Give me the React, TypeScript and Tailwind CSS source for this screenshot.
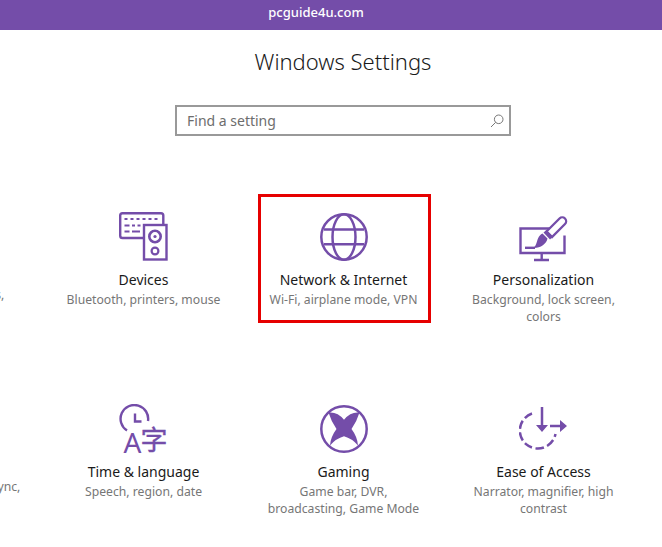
const P = "#744da9";

function DevicesIcon() {
  return (
    <svg width="50" height="50" viewBox="0 0 50 50" fill="none" stroke={P} strokeWidth="2.4">
      <path d="M24 26H3.5a2.3 2.3 0 0 1-2.3-2.3V3.5A2.3 2.3 0 0 1 3.5 1.2H42a2.3 2.3 0 0 1 2.3 2.3V12" />
      <rect x="25" y="13" width="22.5" height="34.5" />
      <circle cx="36" cy="24.5" r="5.7" strokeWidth="2.6" />
      <circle cx="36" cy="24.5" r="1.6" fill={P} stroke="none" />
      <circle cx="36" cy="39" r="3.4" strokeWidth="2.2" />
      <path d="M5.5 7h3M11.5 7h3M17.500 7h3M23.500 7h3M29.500 7h3M35.500 7h3M5.500 13.500h5M13 13.500h3M18.500 13.500h3M5.500 19.500h5M13 19.500h8" strokeWidth="2" />
    </svg>
  );
}

function GlobeIcon() {
  return (
    <svg width="50" height="50" viewBox="0 0 50 50" fill="none" stroke={P} strokeWidth="2.5">
      <circle cx="25" cy="25" r="22.700" />
      <ellipse cx="25" cy="25" rx="11.500" ry="22.700" />
      <path d="M5 17.500h40M5 32.300h40" />
    </svg>
  );
}

function BrushIcon() {
  return (
    <svg width="50" height="50" viewBox="0 0 50 50" fill="none" stroke={P} strokeWidth="2.4">
      <path d="M31 16.500H1.500V41H45.500V23.500" />
      <path d="M22.700 41v7M15 48h15" />
      <path d="M6 35.800h10" />
      <path d="M27.500 19.500 40.500 6.500a3.800 3.800 0 0 1 5.500 5.500L33 25z" strokeWidth="2.300" fill="white" />
      <path d="M24.500 20.500 27.500 18 34 24.500 31 27.500z" fill={P} stroke="none" />
      <path d="M23.500 21.500 28.500 26.500C27.500 32 21 36.500 14 36C17.500 34 17.500 30 19 26.500C20 24 21.500 22.500 23.500 21.500Z" fill={P} stroke="none" />
    </svg>
  );
}

function TimeIcon() {
  return (
    <svg width="50" height="50" viewBox="0 0 50 50" fill="none" stroke={P} strokeWidth="2.400">
      <path d="M8 26.500A13.800 13.800 0 1 1 29 17" />
      <path d="M16 9.500v8h6.500" />
      <text x="4.500" y="49" fontFamily="'Noto Sans', sans-serif" fontSize="28" fill={P} stroke="none">A</text>
      <text x="21.500" y="45.500" fontFamily="'Noto Sans CJK SC', sans-serif" fontSize="27" fill={P} stroke={P} strokeWidth="0.4">字</text>
    </svg>
  );
}

function XboxIcon() {
  return (
    <svg width="50" height="50" viewBox="0 0 50 50" fill="none" stroke={P} strokeWidth="2.500">
      <circle cx="25" cy="25" r="22.700" />
      <path d="M9.500 8.500Q18.500 7.500 25 15.700Q31.500 7.500 40.500 8.500Q38 17 32.500 25Q38.500 33 39 41.500Q33 34.500 25 32.300Q17 34.500 11 41.500Q11.500 33 17.500 25Q12 17 9.500 8.500Z" fill={P} stroke="none" />
    </svg>
  );
}

function EaseIcon() {
  return (
    <svg width="50" height="50" viewBox="1 0 50 50" fill="none" stroke={P} strokeWidth="2.500">
      <path d="M14 9.500A18 18 0 1 0 37.500 30" strokeDasharray="8.500 3.500" />
      <path d="M24 3v20M32 22h10" />
      <path d="M18 21h12l-6 7zM42 16v12l7-6z" fill={P} stroke="none" />
    </svg>
  );
}

function SearchIcon() {
  return (
    <svg width="14" height="14" viewBox="0 0 14 14" fill="none" stroke="#777" strokeWidth="1">
      <circle cx="8.700" cy="5.300" r="4.300" />
      <path d="M5.700 8.300 1 13" />
    </svg>
  );
}

type Item = { title: string; desc: string; icon?: React.ReactNode; marked?: boolean };

const items: Item[] = [
  { title: "System", desc: "Display, notifications, power" },
  { title: "Devices", desc: "Bluetooth, printers, mouse", icon: <DevicesIcon /> },
  { title: "Network & Internet", desc: "Wi-Fi, airplane mode, VPN", icon: <GlobeIcon />, marked: true },
  { title: "Personalization", desc: "Background, lock screen, colors", icon: <BrushIcon /> },
  { title: "Accounts", desc: "Your accounts, email, sync, work, family" },
  { title: "Time & language", desc: "Speech, region, date", icon: <TimeIcon /> },
  { title: "Gaming", desc: "Game bar, DVR, broadcasting, Game Mode", icon: <XboxIcon /> },
  { title: "Ease of Access", desc: "Narrator, magnifier, high contrast", icon: <EaseIcon /> },
];

function Tile({ item }: { item: Item }) {
  return (
    <div
      className={
        "box-border w-[173px] h-[129px] flex flex-col items-center pt-[15px] pr-[2px] border-[3px] " +
        (item.marked ? "border-[#e60000]" : "border-transparent")
      }
    >
      <div className="h-[50px] w-[50px]">{item.icon}</div>
      <div className="mt-[8px] h-[20px] whitespace-nowrap text-[14px] leading-[20px] text-[#1a1a1a]">{item.title}</div>
      <div className="mt-[1px] w-[158px] shrink-0 text-center text-[12.200px] leading-[17px] text-[#767676]">{item.desc}</div>
    </div>
  );
}

export default function App() {
  return (
    <div className="w-[662px] h-[547px] overflow-hidden bg-white font-['Noto_Sans',sans-serif]">
      <div className="h-[30px] bg-[#744da9] flex items-center justify-center pr-[30px] pb-[5px] text-[13px] font-medium text-white">
        pcguide4u.com
      </div>
      <div className="ml-[175px] w-[336px] flex flex-col items-center">
        <h1 className="mt-[13px] h-[36px] text-[22px] leading-[36px] font-light text-[#1a1a1a] whitespace-nowrap">Windows Settings</h1>
        <div className="mt-[26px] box-border w-[336px] h-[31px] border-2 border-[#999999] flex items-center justify-between pl-[10px] pr-[5px]">
          <span className="text-[14px] text-[#6d6d6d]">Find a setting</span>
          <SearchIcon />
        </div>
      </div>
      <div className="mt-[58px] ml-[-142px] grid grid-cols-[repeat(4,173px)] gap-x-[27px] gap-y-[63px]">
        {items.map((item) => (
          <Tile key={item.title} item={item} />
        ))}
      </div>
    </div>
  );
}
